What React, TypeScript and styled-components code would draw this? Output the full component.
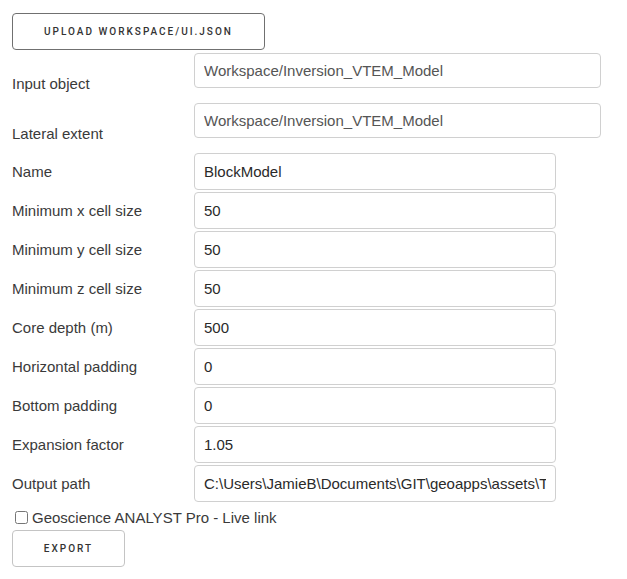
import React from "react";
import styled, { createGlobalStyle } from "styled-components";

const Global = createGlobalStyle`
  html, body { margin: 0; padding: 0; background: #fff; }
  body { font-family: "Liberation Sans", Arial, sans-serif; color: #333; }
`;

const Page = styled.div`
  display: flex;
  flex-direction: column;
  align-items: flex-start;
  padding: 13px 12px 0 12px;
`;

const ActionButton = styled.button<{ $width: number; $strong?: boolean }>`
  width: ${(p) => p.$width}px;
  height: 37px;
  box-sizing: border-box;
  background: #fff;
  border: 1px solid ${(p) => (p.$strong ? "#707070" : "#c4c4c4")};
  border-radius: 4px;
  font-family: Roboto, "Liberation Sans", sans-serif;
  font-weight: 500;
  font-size: 10px;
  letter-spacing: 2px;
  color: #333;
  text-transform: uppercase;
  padding: 0;
  cursor: pointer;
`;

const UploadButton = styled(ActionButton)`
  margin-bottom: 3px;
`;

const Form = styled.div`
  display: flex;
  flex-direction: column;
  align-self: stretch;
`;

const DropdownRow = styled.div`
  display: flex;
  align-items: flex-start;
  height: 50px;
`;

const FieldRow = styled.div`
  display: flex;
  align-items: center;
  height: 37px;
  margin-bottom: 2px;
`;

const Label = styled.label<{ $bottom?: boolean }>`
  width: 182px;
  flex: none;
  font-size: 15px;
  line-height: 17px;
  color: #3a3a3a;
  padding-top: ${(p) => (p.$bottom ? "22px" : "0")};
`;

const TextBox = styled.input<{ $wide?: boolean; $muted?: boolean }>`
  box-sizing: border-box;
  width: ${(p) => (p.$wide ? "407px" : "362px")};
  height: ${(p) => (p.$wide ? "35px" : "37px")};
  border: 1px solid #d0d0d0;
  border-radius: 4px;
  padding: 0 9px;
  font-family: "Liberation Sans", Arial, sans-serif;
  font-size: 15px;
  color: ${(p) => (p.$muted ? "#555" : "#2a2a2a")};
  background: #fff;
  outline: none;
`;

const CheckRow = styled.label`
  display: flex;
  align-items: center;
  height: 26px;
  font-size: 15px;
  color: #3a3a3a;
`;

const Check = styled.input`
  width: 13px;
  height: 13px;
  margin: 0 4px 0 3px;
`;

const dropdowns = [
  { label: "Input object", value: "Workspace/Inversion_VTEM_Model" },
  { label: "Lateral extent", value: "Workspace/Inversion_VTEM_Model" },
];

const fields = [
  { label: "Name", value: "BlockModel" },
  { label: "Minimum x cell size", value: "50" },
  { label: "Minimum y cell size", value: "50" },
  { label: "Minimum z cell size", value: "50" },
  { label: "Core depth (m)", value: "500" },
  { label: "Horizontal padding", value: "0" },
  { label: "Bottom padding", value: "0" },
  { label: "Expansion factor", value: "1.05" },
  {
    label: "Output path",
    value: "C:\\Users\\JamieB\\Documents\\GIT\\geoapps\\assets\\Temp",
  },
];

export default function App() {
  return (
    <>
      <Global />
      <Page>
        <UploadButton $width={253} $strong>
          Upload workspace/ui.json
        </UploadButton>
        <Form>
          {dropdowns.map((d) => (
            <DropdownRow key={d.label}>
              <Label $bottom>{d.label}</Label>
              <TextBox $wide $muted defaultValue={d.value} readOnly />
            </DropdownRow>
          ))}
          {fields.map((f) => (
            <FieldRow key={f.label}>
              <Label>{f.label}</Label>
              <TextBox defaultValue={f.value} />
            </FieldRow>
          ))}
          <CheckRow>
            <Check type="checkbox" />
            Geoscience ANALYST Pro - Live link
          </CheckRow>
        </Form>
        <ActionButton $width={113}>Export</ActionButton>
      </Page>
    </>
  );
}
